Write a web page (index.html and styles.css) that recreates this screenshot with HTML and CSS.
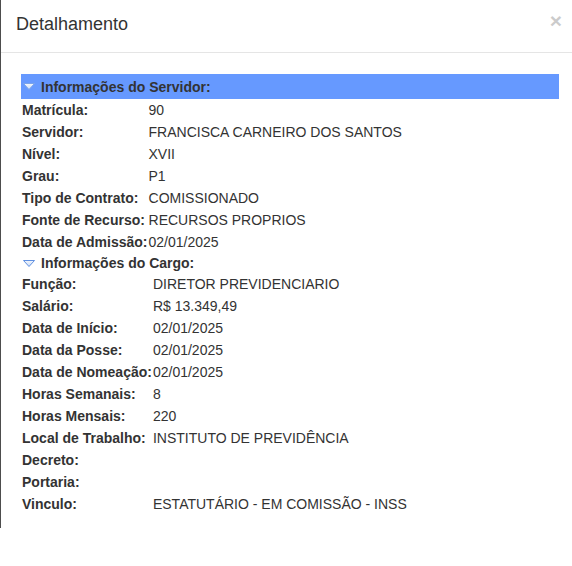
FILE: index.html
```html
<!DOCTYPE html>
<html lang="pt-BR">
<head>
    <meta charset="UTF-8">
    <meta name="viewport" content="width=device-width, initial-scale=1.0">
    <title>Detalhamento</title>
    <link rel="stylesheet" href="styles.css">
</head>
<body>
    <div class="modal">
        <div class="modal-header">
            <h4 class="modal-title">Detalhamento</h4>
            <button class="close" type="button">&times;</button>
        </div>
        <div class="modal-body">
            <div class="section-title bar">
                <svg class="arrow" width="12" height="7" viewBox="0 0 12 7">
                    <defs>
                        <linearGradient id="g1" x1="0" y1="0" x2="0" y2="1">
                            <stop offset="0" stop-color="#f4f7fc"/>
                            <stop offset="1" stop-color="#c9daf5"/>
                        </linearGradient>
                    </defs>
                    <polygon points="0.5,0.5 11.5,0.5 6,6.5" fill="url(#g1)" stroke="#7aa3ea" stroke-width="1"/>
                </svg>
                <span>Informações do Servidor:</span>
            </div>
            <table class="info">
                <tr><td class="label">Matrícula:</td><td>90</td></tr>
                <tr><td class="label">Servidor:</td><td>FRANCISCA CARNEIRO DOS SANTOS</td></tr>
                <tr><td class="label">Nível:</td><td>XVII</td></tr>
                <tr><td class="label">Grau:</td><td>P1</td></tr>
                <tr><td class="label">Tipo de Contrato:</td><td>COMISSIONADO</td></tr>
                <tr><td class="label">Fonte de Recurso:</td><td>RECURSOS PROPRIOS</td></tr>
                <tr><td class="label">Data de Admissão:</td><td>02/01/2025</td></tr>
            </table>
            <div class="section-title">
                <svg class="arrow" width="12" height="7" viewBox="0 0 12 7">
                    <defs>
                        <linearGradient id="g2" x1="0" y1="0" x2="0" y2="1">
                            <stop offset="0" stop-color="#f4f7fc"/>
                            <stop offset="1" stop-color="#c9daf5"/>
                        </linearGradient>
                    </defs>
                    <polygon points="0.5,0.5 11.5,0.5 6,6.5" fill="url(#g2)" stroke="#5f8fe0" stroke-width="1"/>
                </svg>
                <span>Informações do Cargo:</span>
            </div>
            <table class="info">
                <tr><td class="label">Função:</td><td>DIRETOR PREVIDENCIARIO</td></tr>
                <tr><td class="label">Salário:</td><td>R$ 13.349,49</td></tr>
                <tr><td class="label">Data de Início:</td><td>02/01/2025</td></tr>
                <tr><td class="label">Data da Posse:</td><td>02/01/2025</td></tr>
                <tr><td class="label">Data de Nomeação:</td><td>02/01/2025</td></tr>
                <tr><td class="label">Horas Semanais:</td><td>8</td></tr>
                <tr><td class="label">Horas Mensais:</td><td>220</td></tr>
                <tr><td class="label">Local de Trabalho:</td><td>INSTITUTO DE PREVIDÊNCIA</td></tr>
                <tr><td class="label">Decreto:</td><td></td></tr>
                <tr><td class="label">Portaria:</td><td></td></tr>
                <tr><td class="label">Vinculo:</td><td>ESTATUTÁRIO - EM COMISSÃO - INSS</td></tr>
            </table>
        </div>
    </div>
</body>
</html>
```

FILE: styles.css
```css
body {
    margin: 0;
    background: #fff;
    font-family: "Liberation Sans", Arial, sans-serif;
    font-size: 14px;
    color: #333;
}

.modal {
    border-left: 1px solid #4d4d4d;
    background: #fff;
}

.modal-header {
    display: flex;
    justify-content: space-between;
    align-items: flex-start;
    padding: 13px 10px 17px 15px;
    border-bottom: 1px solid #e5e5e5;
}

.modal-title {
    margin: 0;
    font-size: 18px;
    font-weight: normal;
    line-height: 22px;
}

.close {
    margin-top: -3px;
    padding: 0;
    border: none;
    background: none;
    font-family: "Liberation Sans", Arial, sans-serif;
    font-size: 21px;
    font-weight: bold;
    line-height: 1;
    color: #000;
    opacity: 0.2;
    text-shadow: 0 1px 0 #fff;
    cursor: pointer;
}

.modal-body {
    padding: 21px 13px 13px 20px;
}

.section-title {
    display: flex;
    align-items: center;
    gap: 6px;
    height: 20px;
    padding-left: 2px;
    font-weight: bold;
}

.section-title.bar {
    height: 25px;
    background: #6699ff;
}

.arrow {
    flex: none;
}

.info {
    border-collapse: collapse;
}

.info td {
    padding: 1px 0 1px 1px;
    line-height: 20px;
    white-space: nowrap;
}

.info .label {
    font-weight: bold;
}
```
